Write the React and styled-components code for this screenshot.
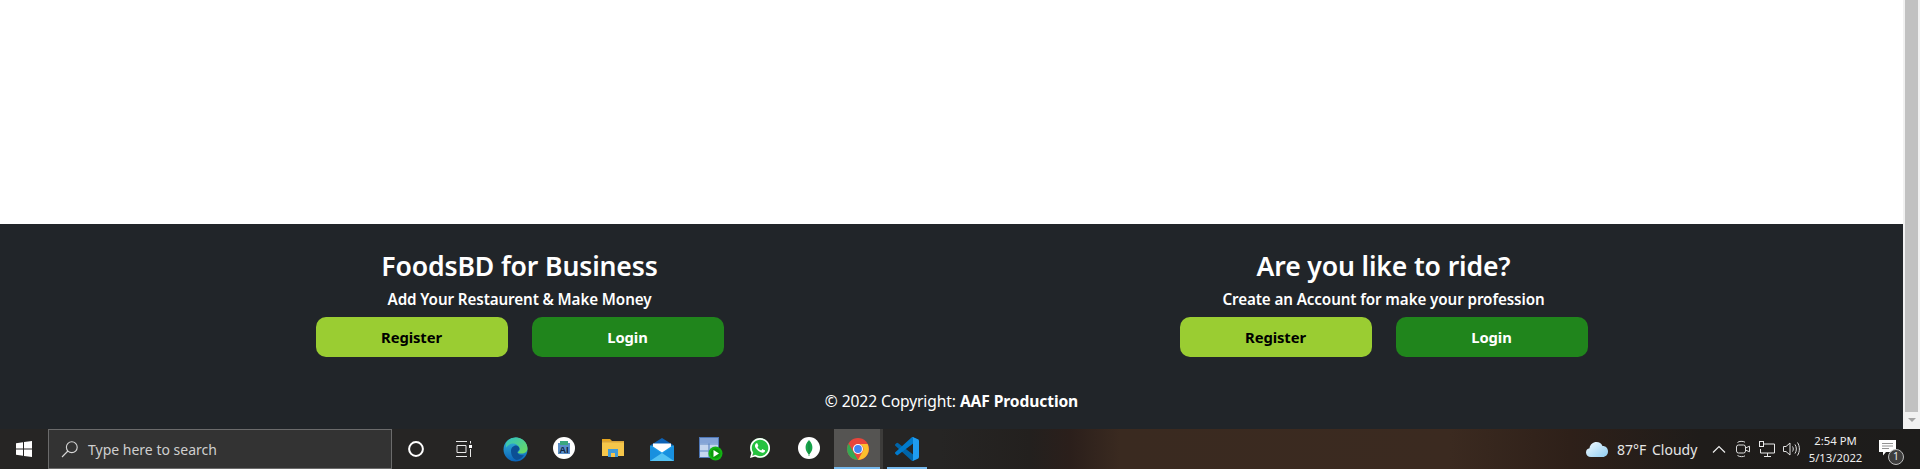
import React from "react";
import styled, { createGlobalStyle } from "styled-components";
import { FaWhatsapp } from "react-icons/fa";

const Global = createGlobalStyle`
  html, body { margin: 0; padding: 0; height: 100%; overflow: hidden; background: #fff; }
  * { box-sizing: border-box; }
  body { font-family: "Noto Sans", "Open Sans", Arial, sans-serif; }
`;

const Page = styled.div`display:flex;flex-direction:column;height:469px;width:1920px;`;
const Viewport = styled.div`display:flex;flex:1;min-height:0;`;
const Content = styled.main`flex:1;display:flex;flex-direction:column;min-width:0;`;
const Blank = styled.div`flex:1;background:#fff;`;
const Footer = styled.footer`height:205px;background:#212529;color:#fff;padding-top:25px;display:flex;flex-direction:column;align-items:center;`;
const Columns = styled.div`width:1728px;display:grid;grid-template-columns:1fr 1fr;`;
const Promo = styled.section`display:flex;flex-direction:column;align-items:center;`;
const Title = styled.h3`margin:0 0 4px;font-size:26.6px;line-height:34px;font-weight:600;letter-spacing:-.15px;`;
const Subtitle = styled.p`margin:0 0 6px;font-size:15.2px;line-height:24px;font-weight:600;letter-spacing:-.1px;`;
const Buttons = styled.div`display:flex;gap:24px;`;
const Action = styled.button`width:192px;height:40px;border:0;border-radius:10px;padding:0;font-family:inherit;font-size:14.8px;font-weight:700;letter-spacing:-.1px;background:${p=>p.$primary?"#9acd32":"#20851c"};color:${p=>p.$primary?"#000":"#fff"};`;
const Copyright = styled.p`margin:32px 0 0;font-size:15.6px;line-height:24px;letter-spacing:-.1px;strong{font-weight:700;}`;

const Scrollbar = styled.div`width:17px;background:#f1f1f1;display:flex;flex-direction:column;align-items:center;`;
const Thumb = styled.div`flex:1;width:13px;background:#c1c1c1;`;
const ArrowBox = styled.div`height:17px;display:flex;align-items:center;justify-content:center;`;
const Arrow = styled.div`width:0;height:0;margin-top:-1px;border-left:4px solid transparent;border-right:4px solid transparent;border-top:4px solid #a3a3a3;`;

const Taskbar = styled.div`height:40px;display:flex;align-items:stretch;justify-content:space-between;color:#fff;
  background:linear-gradient(90deg,#262524 0,#262524 940px,#23201e 1030px,#2b1f1b 1070px,#3a2a20 1120px,#3b2a20 1450px,#2e2019 1570px,#1f1c1a 1700px,#1d1c1b 100%);`;
const TaskGroup = styled.div`display:flex;align-items:stretch;`;
const Slot = styled.div`position:relative;width:${p=>p.$w||49}px;padding-right:${p=>p.$w?0:1}px;display:flex;align-items:center;justify-content:center;
  background:${p=>p.$active?"linear-gradient(90deg,#555452 0,#555452 46px,#3d3c3a 46px,#3d3c3a 49px)":"transparent"};`;
const Underline = styled.span`position:absolute;bottom:0;height:2px;background:#76b9ed;left:${p=>p.$full?0:4}px;right:${p=>p.$full?3:5}px;`;
const Search = styled.div`width:344px;background:#333;border:1px solid #6b6b6b;display:flex;align-items:center;gap:10px;padding-left:12px;font-size:14px;color:#cfcfcf;`;
const Tray = styled.div`display:flex;align-items:stretch;`;
const Weather = styled.div`width:129px;padding-left:8px;display:flex;align-items:center;font-size:14px;color:#e6e6e6;`;
const Temp = styled.span`margin-left:9px;width:35px;`;
const TrayIcon = styled.div`width:24px;display:flex;align-items:center;justify-content:center;`;
const Clock = styled.div`width:65px;display:flex;flex-direction:column;align-items:center;justify-content:center;font-size:11.3px;line-height:17px;color:#eee;`;
const Notify = styled.div`position:relative;width:52px;display:flex;align-items:center;padding:0 0 2px 11px;`;
const Badge = styled.span`position:absolute;left:20px;top:20px;width:16px;height:16px;border-radius:50%;background:#3d3d3d;border:1.5px solid #bdbdbd;font-size:10.5px;line-height:13px;text-align:center;color:#e6e6e6;`;
const WaDisc = styled.div`width:20px;height:20px;margin-top:-2px;border-radius:50%;background:#25c23f;display:flex;align-items:center;justify-content:center;svg{display:block;}`;
const Raised = styled.div`margin-top:-2px;display:flex;`;

const WinLogo = () => (<svg width="16" height="16" viewBox="0 0 16 16" fill="#fff"><polygon points="0,2.3 7,1.3 7,7.5 0,7.5"/><polygon points="8,1.1 16,0 16,7.5 8,7.5"/><polygon points="0,8.5 7,8.5 7,14.7 0,13.7"/><polygon points="8,8.5 16,8.5 16,16 8,14.9"/></svg>);
const Magnifier = () => (<svg width="17" height="17" viewBox="0 0 17 17" fill="none" stroke="#d8d8d8" strokeWidth="1.1"><circle cx="10.8" cy="6.2" r="5.4"/><line x1="6.9" y1="10" x2="1" y2="16"/></svg>);
const Cortana = () => (<svg width="16" height="16" viewBox="0 0 16 16" fill="none" stroke="#fff" strokeWidth="2"><circle cx="8" cy="8" r="6.9"/></svg>);
const TaskView = () => (<svg width="16" height="16" viewBox="0 0 16 16" fill="none" stroke="#e8e8e8" strokeWidth="1"><path d="M0 .5h11M1 4.5h9v7H1zM0 15.5h11M14.5 0v2.5M14.5 8v8"/><rect x="13" y="4" width="3" height="3" fill="#fff" stroke="none"/></svg>);

const Edge = () => (<svg width="25" height="25" viewBox="0 0 25 25"><defs><linearGradient id="eb" x1="0" y1="0" x2="0" y2="1"><stop offset="0" stopColor="#36b7d8"/><stop offset="1" stopColor="#0a62b8"/></linearGradient><linearGradient id="eg" x1="0" y1="0" x2="1" y2="1"><stop offset="0" stopColor="#2fc1c4"/><stop offset="1" stopColor="#6fdc5a"/></linearGradient></defs><circle cx="12.5" cy="12.5" r="12" fill="url(#eb)"/><path d="M3 6C6 1 11 .3 14 .6c6 .6 10.5 5.5 10.5 11 0 3-2.500 5-6 5-2 0-3.500-.6-4-1.300 2-1 2.500-2.500 2-4.300C15.500 7.500 12 6 9 6.500 6.500 7 4.500 8.500 3 10.500z" fill="url(#eg)"/><path d="M8 14c0-3.500 3-6 6-5.300 2 .5 3 2.500 2.200 4.300-1 .6-2 1.500-1.700 2.800.6 2 3.500 3 6.500 2.300-1.500 2.500-4 4.500-7 5-3.500-.4-6-4.800-6-9.100z" fill="#0c4f94"/></svg>);
const DocApp = () => (<Raised><svg width="22" height="22" viewBox="0 0 22 22"><circle cx="11" cy="11" r="11" fill="#fff"/><path d="M5 6h12v11H5z" fill="#5a8fc8"/><path d="M7 4h8v4H7z" fill="#3aa77e"/><text x="11" y="16" fontSize="9.500" fontWeight="700" fontFamily="Liberation Sans" textAnchor="middle" fill="#10233f">AI</text></svg></Raised>);
const Folder = () => (<Raised><svg width="22" height="18" viewBox="0 0 22 18"><path d="M0 0h8l2 2h-10z" fill="#e5a51f"/><rect y="2" width="22" height="15" fill="#f5c64a"/><rect y="2" width="22" height="1.500" fill="#d9a43a"/><path d="M6 10h10v8h-3v-4h-4v4h-3z" fill="#3f9ad8"/><rect x="9" y="14" width="4" height="4" fill="#f6c34a"/></svg></Raised>);
const Mail = () => (<svg width="24" height="23" viewBox="0 0 24 23"><path d="M0 7.500L12 0l12 7.500z" fill="#0d62b5"/><rect x="0" y="7.500" width="24" height="15.500" fill="#1c9be8"/><path d="M3 5.500h18v3l-9 6-9-6z" fill="#fff"/><path d="M0 8l12 8 12-8v15H0z" fill="#1890df"/><path d="M0 23l12-8 12 8z" fill="#53c2f3"/></svg>);
const Sheets = () => (<svg width="24" height="24" viewBox="0 0 24 24"><rect x=".5" y=".5" width="19" height="20" fill="#c5d6ee" stroke="#4f77b6"/><path d="M1 7h18M1 14h18M10 1v20" stroke="#5d86c2" strokeWidth="1.200"/><rect x="1" y="1" width="18" height="5.500" fill="#84a4d6"/><circle cx="16.500" cy="16.500" r="7" fill="#13b313"/><circle cx="16.500" cy="16.500" r="5" fill="#0a9a0a"/><path d="M14.500 13l5.500 3.500-5.500 3.500z" fill="#fff"/></svg>);
const Mongo = () => (<Raised><svg width="22" height="22" viewBox="0 0 22 22"><circle cx="11" cy="11" r="11" fill="#fff"/><path d="M11 3c2.600 2.600 3.600 5.300 3.400 8-.2 2.800-1.600 4.800-3 6.200V19h-.8v-1.800C9.200 15.800 7.800 13.800 7.600 11 7.400 8.300 8.400 5.600 11 3z" fill="#17a34a"/><path d="M11 5v12" stroke="#0f7a36" strokeWidth=".7"/></svg></Raised>);
const Chrome = () => (<svg width="22" height="22" viewBox="0 0 22 22"><circle cx="11" cy="11" r="11" fill="#e8453c"/><path d="M1.500 5.500L6.500 14 11 22A11 11 0 0 1 1.500 5.500z" fill="#34a853"/><path d="M11 6h9.600A11 11 0 0 1 11 22l4.700-8.500A5 5 0 0 0 11 6z" fill="#fbc02d"/><circle cx="11" cy="11" r="5" fill="#fff"/><circle cx="11" cy="11" r="3.900" fill="#4285f4"/></svg>);
const VSCode = () => (<svg width="24" height="24" viewBox="0 0 100 100"><path d="M96.46 89.2 75.86 99.13a6.2 6.2 0 0 1-7.1-1.2L1.34 36.43a4.17 4.17 0 0 1 0-6.16l5.5-5a4.17 4.17 0 0 1 5.3-.24l81.25 61.6A4.13 4.13 0 0 0 100 82.3v.24a6.2 6.2 0 0 1-3.54 6.66z" fill="#0065a9"/><path d="M96.46 10.81 75.85.87a6.2 6.2 0 0 0-7.1 1.2L1.34 63.57a4.17 4.17 0 0 0 0 6.16l5.5 5a4.17 4.17 0 0 0 5.3.24l81.25-61.6A4.13 4.13 0 0 1 100 16.7v-.24a6.2 6.2 0 0 0-3.54-5.65z" fill="#007acc"/><path d="M75.85 99.13a6.2 6.2 0 0 1-7.1-1.2c2.3 2.3 6.25.67 6.25-2.6V4.670c0-3.270-3.950-4.900-6.250-2.600a6.200 6.200 0 0 1 7.100-1.200l20.600 9.900A6.200 6.200 0 0 1 100 16.400v67.200a6.200 6.200 0 0 1-3.540 5.600z" fill="#1f9cf0"/></svg>);

const CloudIcon = () => (<svg width="22" height="15" viewBox="0 0 22 15"><defs><linearGradient id="cl" x1="0" y1="0" x2="1" y2="1"><stop offset="0" stopColor="#f4fbff"/><stop offset="1" stopColor="#8fcdf2"/></linearGradient></defs><path d="M5 15C2 15 0 13 0 10.500 0 8 1.500 6.500 3.500 6.200 4 2.500 7 0 10.500 0c2.800 0 5 1.500 6 4 3-.2 5.500 2 5.500 5.500 0 3-2.200 5.500-5.500 5.500z" fill="url(#cl)"/></svg>);
const Chevron = () => (<svg width="14" height="8" viewBox="0 0 14 8" fill="none" stroke="#eee" strokeWidth="1.200"><path d="M1 7.500l6-6 6 6"/></svg>);
const MeetNow = () => (<svg width="16" height="18" viewBox="0 0 16 18" fill="none" stroke="#ddd" strokeWidth="1"><path d="M2.500 2.500C4 1 8 1 10 2.200M2.500 15.500c2 1.500 6 1.500 7.500.3"/><rect x="1.500" y="5" width="9" height="8" rx="2"/><path d="M10.500 8l4-1.800v5.600l-4-1.800"/></svg>);
const Network = () => (<svg width="17" height="17" viewBox="0 0 17 17" fill="none" stroke="#e8e8e8" strokeWidth="1"><path d="M4.500 3H15.500V12H1.500V8"/><path d="M8.500 12v3M5 15.500h7"/><rect x="0.500" y="0.500" width="4" height="5"/></svg>);
const Speaker = () => (<svg width="17" height="16" viewBox="0 0 17 16" fill="none" stroke="#e0e0e0" strokeWidth="1"><path d="M.5 5.500h2.500L7 2v12L3 10.500H.5zM9.500 5.500c1 1.500 1 3.500 0 5M12 3.500c1.800 2.500 1.800 6.500 0 9M14.500 1.500c2.500 3.800 2.500 9.200 0 13"/></svg>);
const Bubble = () => (<svg width="17" height="17" viewBox="0 0 17 17"><path d="M0 0h17v12H7l-3 3.500V12H0z" fill="#fff"/><path d="M3 3.500h11M3 6h11M3 8.500h7" stroke="#777" strokeWidth=".8"/></svg>);

function PromoCard({ title, text }) {
  return (
    <Promo>
      <Title>{title}</Title>
      <Subtitle>{text}</Subtitle>
      <Buttons>
        <Action $primary>Register</Action>
        <Action>Login</Action>
      </Buttons>
    </Promo>
  );
}

export default function App() {
  return (
    <Page>
      <Global />
      <Viewport>
        <Content>
          <Blank />
          <Footer>
            <Columns>
              <PromoCard title="FoodsBD for Business" text="Add Your Restaurent & Make Money" />
              <PromoCard title="Are you like to ride?" text="Create an Account for make your profession" />
            </Columns>
            <Copyright>© 2022 Copyright: <strong>AAF Production</strong></Copyright>
          </Footer>
        </Content>
        <Scrollbar>
          <Thumb />
          <ArrowBox><Arrow /></ArrowBox>
        </Scrollbar>
      </Viewport>
      <Taskbar>
        <TaskGroup>
          <Slot $w={48}><WinLogo /></Slot>
          <Search><Magnifier /><span>Type here to search</span></Search>
          <Slot $w={48}><Cortana /></Slot>
          <Slot $w={48}><TaskView /></Slot>
          <Slot $w={3} />
          <Slot><Edge /></Slot>
          <Slot><DocApp /></Slot>
          <Slot><Folder /></Slot>
          <Slot><Mail /></Slot>
          <Slot><Sheets /></Slot>
          <Slot><WaDisc><FaWhatsapp size={24} color="#fff" /></WaDisc></Slot>
          <Slot><Mongo /></Slot>
          <Slot $active><Chrome /><Underline $full /></Slot>
          <Slot><VSCode /><Underline /></Slot>
        </TaskGroup>
        <Tray>
          <Weather><CloudIcon /><Temp>87°F</Temp><span>Cloudy</span></Weather>
          <TrayIcon><Chevron /></TrayIcon>
          <TrayIcon><MeetNow /></TrayIcon>
          <TrayIcon><Network /></TrayIcon>
          <TrayIcon><Speaker /></TrayIcon>
          <Clock><span>2:54 PM</span><span>5/13/2022</span></Clock>
          <Notify><Bubble /><Badge>1</Badge></Notify>
        </Tray>
      </Taskbar>
    </Page>
  );
}
